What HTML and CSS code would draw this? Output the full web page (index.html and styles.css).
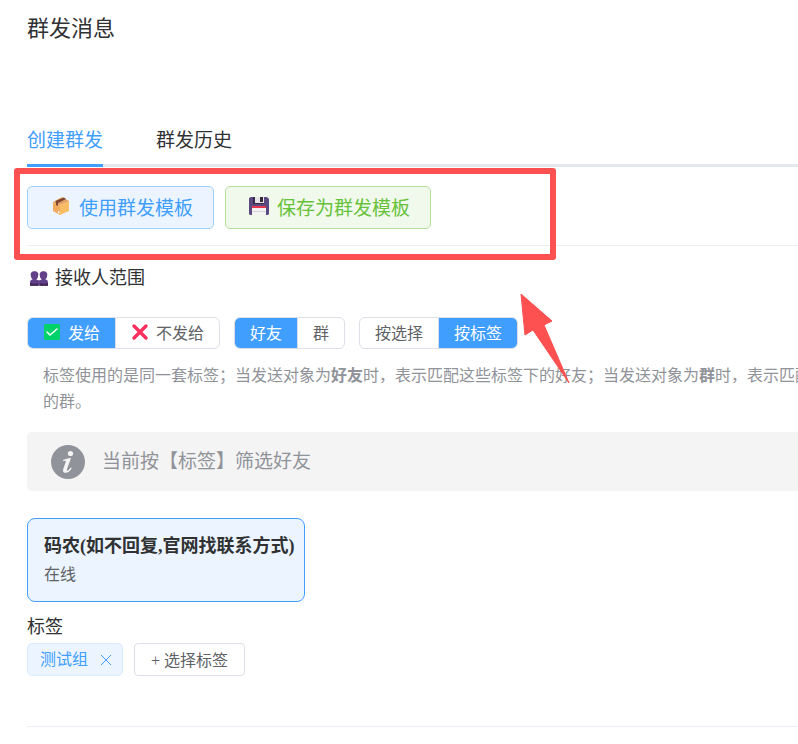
FILE: index.html
```
<!DOCTYPE html>
<html lang="zh-CN">
<head>
    <meta charset="UTF-8">
    <meta name="viewport" content="width=device-width, initial-scale=1.0">
    <title>群发消息</title>
    <link rel="stylesheet" href="styles.css">
</head>
<body>
    <main class="page">
        <h1>群发消息</h1>

        <nav class="tabs">
            <a class="tab active" href="#create">创建群发</a>
            <a class="tab" href="#history">群发历史</a>
        </nav>

        <section class="template-bar">
            <button type="button" class="btn btn-primary">
                <svg class="icon" viewBox="0 0 20 20" aria-hidden="true">
                    <path fill="#f0ab5c" d="M2 6l7 3v10l-7-4z"/>
                    <path fill="#f9bd66" d="M9 9l9-4v10l-9 4z"/>
                    <path fill="#e3a062" d="M2 6l9-5 7 4-9 4z"/>
                    <path fill="#7d4533" d="M4.500 5l8.500-3.500L15 3 7 7v3L5 9V6.500z"/>
                    <path fill="#fff" d="M7 15l1.500.5v2L7 17z"/>
                </svg>
                使用群发模板
            </button>
            <button type="button" class="btn btn-success">
                <svg class="icon" viewBox="0 0 20 20" aria-hidden="true">
                    <path fill="#5b4a80" d="M2 1h16l2 2v15l-1 1H1l-1-1V2z"/>
                    <path fill="#3a2a4a" d="M4 1h11v7H4z"/>
                    <path fill="#e6e6e6" d="M6 1h9v6H6z"/>
                    <path fill="#3a2a3a" d="M11 1h3v5h-3z"/>
                    <path fill="#f4f4f4" d="M3 10h14v9H3z"/>
                    <path fill="#e8384f" d="M3 10h14v2H3z"/>
                    <path fill="#d5d5d5" d="M3 15h14v1H3z"/>
                </svg>
                保存为群发模板
            </button>
            <div class="highlight"></div>
        </section>

        <section class="receivers">
            <h2>
                <svg class="icon-people" viewBox="0 0 20 16" aria-hidden="true">
                    <path fill="#62418a" d="M5 0C2 0 0 2 1 5c0 2 1 3 2 4-2 0-3 1-3 4v3h20v-3c0-3-1-4-3-4 1-1 2-2 2-4 1-3-1-5-4-5s-5 2-4 5c0 2 1 3 2 4-1 0-2 1-3 1s-2-1-3-1c1-1 2-2 2-4 1-3-1-5-4-5z"/>
                    <path fill="#432557" d="M0 13c3 1 6 1 9 0v3H0zM11 13c3 1 6 1 9 0v3h-9z"/>
                </svg>
                接收人范围
            </h2>

            <div class="filters">
                <div class="segment">
                    <label>
                        <input type="radio" name="mode" checked>
                        <span>
                            <svg class="icon-mark" viewBox="0 0 18 18" aria-hidden="true">
                                <rect x="1" y="1" width="16" height="16" rx="2" fill="#00d26a"/>
                                <path d="M4 9l3 3 7-6" fill="none" stroke="#fff" stroke-width="1.5" stroke-linecap="round"/>
                            </svg>
                            发给
                        </span>
                    </label>
                    <label>
                        <input type="radio" name="mode">
                        <span>
                            <svg class="icon-mark" viewBox="0 0 18 18" aria-hidden="true">
                                <path d="M3 3l12 12M15 3L3 15" fill="none" stroke="#f8315f" stroke-width="3.5" stroke-linecap="round"/>
                            </svg>
                            不发给
                        </span>
                    </label>
                </div>
                <div class="segment">
                    <label><input type="radio" name="target" checked><span>好友</span></label>
                    <label><input type="radio" name="target"><span>群</span></label>
                </div>
                <div class="segment">
                    <label><input type="radio" name="by"><span>按选择</span></label>
                    <label><input type="radio" name="by" checked><span>按标签</span></label>
                </div>
            </div>

            <p class="hint">
                标签使用的是同一套标签；当发送对象为<b>好友</b>时，表示匹配这些标签下的好友；当发送对象为<b>群</b>时，表示匹配这些标签下<br>
                的群。
            </p>

            <svg class="arrow" viewBox="0 0 50 90" aria-hidden="true">
                <path fill="#fd5050" stroke="#fd5050" stroke-linejoin="round" d="M1 1l31 27-8 4 25 58-36-53-8 5z"/>
            </svg>
        </section>

        <div class="alert">
            <svg class="icon-info" viewBox="0 0 34 34" aria-hidden="true">
                <circle cx="17" cy="17" r="17" fill="#909399"/>
                <circle cx="19.5" cy="8.5" r="2.6" fill="#f4f4f5"/>
                <path fill="#f4f4f5" d="M12 15c3-1 5-2 8-2l-4 11c0 1 0 2 1 1.5l3-3 .8.7c-2 3-4 4.5-6 4.5-3 0-3-2-2.5-4l2.5-7c0-1-1-1-2.500-.5z"/>
            </svg>
            当前按【标签】筛选好友
        </div>

        <div class="account">
            <strong>码农(如不回复,官网找联系方式)</strong>
            <span>在线</span>
        </div>

        <section class="tags">
            <h3>标签</h3>
            <div class="tag-row">
                <span class="tag">
                    测试组
                    <button type="button" class="tag-close" aria-label="移除">
                        <svg viewBox="0 0 12 12" aria-hidden="true">
                            <path d="M1 1l10 10M11 1L1 11" fill="none" stroke="currentColor"/>
                        </svg>
                    </button>
                </span>
                <button type="button" class="btn-small">+ 选择标签</button>
            </div>
        </section>
    </main>
</body>
</html>
```

FILE: styles.css
```
* {
    box-sizing: border-box;
}

body {
    margin: 0;
    background-color: #fff;
    color: #303133;
    font-family: "Liberation Serif", "Noto Sans CJK SC", sans-serif;
    font-size: 16px;
}

button {
    font-family: inherit;
    cursor: pointer;
}

h1, h2, h3, p {
    margin: 0;
    font-weight: normal;
}

.page {
    padding: 13px 0 16px 27px;
    overflow: hidden;
}

h1 {
    font-size: 22px;
    line-height: 32px;
}

.tabs {
    display: flex;
    gap: 53px;
    margin-top: 71px;
    border-bottom: 3px solid #e4e7ed;
}

.tab {
    height: 51px;
    margin-bottom: -3px;
    font-size: 19px;
    line-height: 50px;
    color: #303133;
    text-decoration: none;
}

.tab.active {
    color: #409eff;
    border-bottom: 3px solid #409eff;
}

.template-bar {
    position: relative;
    display: flex;
    gap: 11px;
    padding: 19px 0 16px;
    border-bottom: 1px solid #ebeef5;
}

.btn {
    display: flex;
    align-items: center;
    gap: 8px;
    height: 43px;
    padding: 0 20px 3px 23px;
    border: 1px solid;
    border-radius: 5px;
    font-size: 19px;
}

.btn-primary {
    color: #409eff;
    background-color: #ecf5ff;
    border-color: #a0cfff;
}

.btn-success {
    color: #67c23a;
    background-color: #f0f9eb;
    border-color: #b3e19d;
}

.icon {
    width: 20px;
    height: 20px;
}

/* 红框标注 */
.highlight {
    position: absolute;
    top: 1px;
    left: -13px;
    width: 542px;
    height: 92px;
    border: 6px solid #fd5050;
    border-radius: 3px;
    pointer-events: none;
}

.receivers {
    position: relative;
    padding-top: 18px;
}

h2 {
    display: flex;
    align-items: center;
    gap: 7px;
    padding-left: 3px;
    font-size: 18px;
    line-height: 28px;
}

.icon-people {
    width: 18px;
    height: 15px;
}

.filters {
    display: flex;
    gap: 14px;
    margin-top: 25px;
}

.segment {
    display: flex;
    height: 32px;
    border: 1px solid #dcdfe6;
    border-radius: 6px;
    overflow: hidden;
}

.segment label + label {
    border-left: 1px solid #dcdfe6;
}

.segment input {
    position: absolute;
    opacity: 0;
}

.segment span {
    display: flex;
    align-items: center;
    gap: 7px;
    height: 30px;
    padding: 0 15px 2px;
    color: #606266;
    white-space: nowrap;
    cursor: pointer;
}

.segment input:checked + span {
    color: #fff;
    background-color: #409eff;
}

.icon-mark {
    width: 18px;
    height: 18px;
}

.hint {
    margin-top: 14px;
    padding-left: 16px;
    line-height: 26px;
    color: #909399;
    white-space: nowrap;
    overflow: hidden;
}

.arrow {
    position: absolute;
    top: 47px;
    left: 493px;
    width: 50px;
    height: 90px;
}

.alert {
    display: flex;
    align-items: center;
    gap: 17px;
    height: 59px;
    margin-top: 17px;
    padding: 0 24px;
    border-radius: 5px 0 0 5px;
    background-color: #f4f4f5;
    color: #909399;
    font-size: 19px;
    line-height: 28px;
}

.icon-info {
    width: 34px;
    height: 34px;
}

.account {
    width: fit-content;
    height: 84px;
    margin-top: 27px;
    padding: 13px 9px 13px 16px;
    border: 1px solid #409eff;
    border-radius: 8px;
    background-color: #ecf5ff;
}

.account strong {
    display: block;
    font-size: 18px;
    line-height: 28px;
}

.account span {
    display: block;
    line-height: 30px;
    color: #606266;
}

.tags {
    margin-top: 11px;
    padding-bottom: 50px;
    border-bottom: 1px solid #ebeef5;
}

h3 {
    font-size: 18px;
    line-height: 28px;
}

.tag-row {
    display: flex;
    gap: 11px;
    margin-top: 2px;
}

.tag {
    display: flex;
    align-items: center;
    gap: 12px;
    height: 33px;
    padding: 0 10px 0 12px;
    border: 1px solid #d9ecff;
    border-radius: 5px;
    background-color: #ecf5ff;
    color: #409eff;
    line-height: 28px;
}

.tag-close {
    display: flex;
    padding: 0;
    border: none;
    background: none;
    color: #409eff;
}

.tag-close svg {
    width: 12px;
    height: 12px;
}

.btn-small {
    height: 33px;
    padding: 0 16px 2px;
    border: 1px solid #dcdfe6;
    border-radius: 4px;
    background-color: #fff;
    color: #606266;
    font-size: 16px;
}
```
